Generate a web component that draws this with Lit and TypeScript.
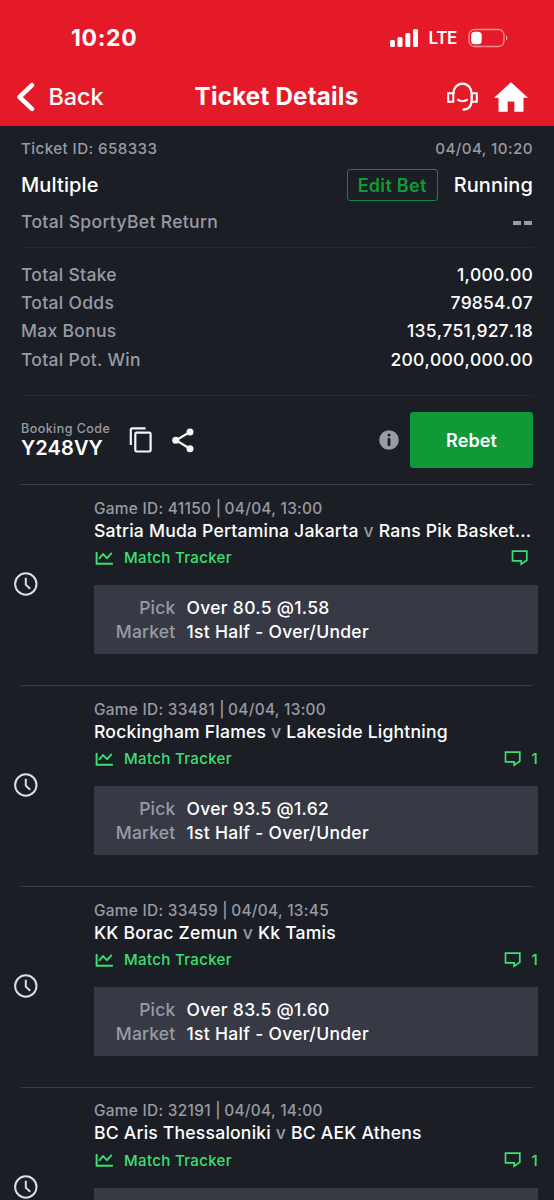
import { LitElement, html, css, nothing } from "lit";
import { customElement, property } from "lit/decorators.js";

interface Game {
  id: string;
  time: string;
  home: string;
  away: string;
  pick?: string;
  comments?: number;
}

const GAMES: Game[] = [
  { id: "41150", time: "04/04, 13:00", home: "Satria Muda Pertamina Jakarta", away: "Rans Pik Basket...", pick: "Over 80.5 @1.58" },
  { id: "33481", time: "04/04, 13:00", home: "Rockingham Flames", away: "Lakeside Lightning", pick: "Over 93.5 @1.62", comments: 1 },
  { id: "33459", time: "04/04, 13:45", home: "KK Borac Zemun", away: "Kk Tamis", pick: "Over 83.5 @1.60", comments: 1 },
  { id: "32191", time: "04/04, 14:00", home: "BC Aris Thessaloniki", away: "BC AEK Athens", comments: 1 },
];

const TOTALS: [string, string][] = [
  ["Total Stake", "1,000.00"],
  ["Total Odds", "79854.07"],
  ["Max Bonus", "135,751,927.18"],
  ["Total Pot. Win", "200,000,000.00"],
];

@customElement("game-row")
export class GameRow extends LitElement {
  @property({ attribute: false }) game!: Game;

  static styles = css`
    :host { display: block; height: 200.85px; box-sizing: border-box; }
    .row { display: flex; }
    .rule { height: 1px; background: #383b45; margin: 0 21px; }
    .status { width: 94px; flex: none; box-sizing: border-box; padding: 86px 0 0 13px; }
    .status svg { display: block; }
    .info { flex: 1; min-width: 0; padding-top: 13.5px; }
    .meta { font-size: 15.4px; line-height: 20px; letter-spacing: 0.3px; color: #989aa4; white-space: nowrap; }
    .sep { letter-spacing: -0.3px; }
    .teams { margin: 1px 15px 0 0; font-size: 17.6px; line-height: 22px; letter-spacing: 0.2px; color: #fff; white-space: nowrap; }
    .v { color: #989aa4; }
    .links { display: flex; align-items: center; height: 20px; margin: 6px 16px 0 0; color: #3ae071; font-size: 15px; letter-spacing: 0.35px; }
    .tracker { margin-left: 10px; flex: 1; }
    .comment { display: block; margin-right: 10px; }
    .bet { display: grid; grid-template-columns: 81.5px 1fr; column-gap: 11px; align-content: center; box-sizing: border-box; height: 68.5px; padding-top: 1.5px; margin: 17.5px 16px 0 0; background: #373a45; font-size: 17.5px; line-height: 24px; letter-spacing: 0.3px; color: #fff; }
    .label { text-align: right; color: #989aa4; letter-spacing: 0.2px; }
  `;

  render() {
    const g = this.game;
    return html`
      <div class="rule"></div>
      <div class="row">
        <div class="status">
          <svg width="25" height="26" viewBox="0 0 25 26" fill="none" stroke="#dcdee4" stroke-width="2">
            <circle cx="12.8" cy="13" r="10.7" />
            <path d="M12.8 6.8v6.8l4.4 4.2" />
          </svg>
        </div>
        <div class="info">
          <div class="meta">Game ID: ${g.id} <span class="sep">| </span>${g.time}</div>
          <div class="teams">${g.home} <span class="v">v</span> ${g.away}</div>
          <div class="links">
            <svg width="20" height="16" viewBox="0 0 20 16" fill="none" stroke="currentColor" stroke-width="1.9">
              <path d="M2.6 2v11.8h16.3" />
              <path d="M5 8.8l4-4.6 4 4 4.8-5.4" />
            </svg>
            <span class="tracker">Match Tracker</span>
            <svg class="comment" width="17" height="16" viewBox="0 0 17 16" fill="none" stroke="currentColor" stroke-width="1.7">
              <path d="M1.5 1.2h14.3v9l-5.6 4v-3.4H1.5z" />
            </svg>
            ${g.comments ? html`<span>${g.comments}</span>` : nothing}
          </div>
          <div class="bet">
            ${g.pick
              ? html`<span class="label">Pick</span><span>${g.pick}</span>
                  <span class="label">Market</span><span>1st Half - Over/Under</span>`
              : nothing}
          </div>
        </div>
      </div>
    `;
  }
}

@customElement("app-root")
export class AppRoot extends LitElement {
  static styles = css`
    :host { display: block; height: 1200px; overflow: hidden; background: #1b1e25; color: #fff; font-family: Inter, "Liberation Sans", sans-serif; font-weight: 500; }
    svg { display: block; flex: none; }
    header { height: 126px; background: #e51a28; overflow: hidden; }
    .statusbar { display: flex; align-items: center; height: 26px; padding: 24.5px 45px 0 71px; }
    .clock { flex: 1; font-size: 22.9px; font-weight: 700; letter-spacing: 0.7px; }
    .lte { margin: 0 11px 0 9px; font-size: 17px; font-weight: 600; letter-spacing: -0.35px; }
    .nav { display: grid; grid-template-columns: 1fr auto 1fr; align-items: center; height: 40px; margin-top: 26px; padding: 0 26px 0 16px; }
    .back { display: flex; align-items: center; gap: 13.5px; font-size: 23.5px; letter-spacing: -0.1px; }
    .title { font-size: 24.2px; font-weight: 700; letter-spacing: 0.2px; margin-left: 9px; }
    .actions { display: flex; align-items: center; justify-content: flex-end; gap: 16px; }
    .grey { color: #989aa4; }
    .line { display: flex; justify-content: space-between; align-items: center; padding: 0 21px; }
    .ids { height: 20px; padding-top: 12px; font-size: 15.2px; letter-spacing: 0.4px; }
    .kind { height: 34px; padding-top: 10px; font-size: 20px; letter-spacing: 0.12px; }
    .state { display: flex; align-items: center; gap: 16px; }
    .edit { box-sizing: border-box; width: 91px; height: 32px; border: 1.5px solid #168539; border-radius: 3px; display: flex; align-items: center; justify-content: center; color: #119b37; font-size: 18px; font-weight: 600; letter-spacing: 0.3px; }
    .return { height: 28px; padding-top: 5px; font-size: 17.5px; letter-spacing: 0.34px; }
    .dashes { display: flex; gap: 3px; padding: 3px 1px 0 0; }
    .dash { width: 8px; height: 4px; background: #989aa4; }
    .faint { height: 1px; margin: 12px 21px 0; background: #262930; }
    .totals { padding: 12px 0 10px; }
    .total { height: 28.35px; font-size: 17.5px; letter-spacing: 0.3px; }
    .amount { letter-spacing: 0.2px; font-kerning: none; }
    .booking { display: flex; align-items: center; height: 56px; padding: 16px 21px; }
    .code { width: 108px; }
    .small { font-size: 12.5px; line-height: 16px; letter-spacing: 0.45px; white-space: nowrap; }
    .value { font-size: 20px; line-height: 22px; font-weight: 600; letter-spacing: 0.1px; }
    .share { margin-left: 18.5px; flex: 1; }
    .rebet { width: 123px; height: 56px; margin-left: 11px; border-radius: 3px; background: #109a37; display: flex; align-items: center; justify-content: center; font-size: 18px; font-weight: 600; letter-spacing: 0.1px; }
  `;

  render() {
    return html`
      <header>
        <div class="statusbar">
          <span class="clock">10:20</span>
          <svg width="30" height="18" viewBox="0 0 30 18" fill="#fff">
            <rect x="1" y="11" width="5" height="7" rx="1.5" /><rect x="8.5" y="8" width="5" height="10" rx="1.5" />
            <rect x="16.3" y="4" width="5" height="14" rx="1.5" /><rect x="24" y="0" width="5" height="18" rx="1.5" />
          </svg>
          <span class="lte">LTE</span>
          <svg width="41" height="20" viewBox="0 0 41 20">
            <rect x="1" y="1.5" width="35" height="17" rx="5.5" fill="none" stroke="#fff" stroke-opacity=".5" stroke-width="1.3" />
            <rect x="3.2" y="3.7" width="10.5" height="12.6" rx="3.6" fill="#fff" />
            <path d="M38 7.2q3 2.8 0 5.6z" fill="#fff" fill-opacity=".6" />
          </svg>
        </div>
        <div class="nav">
          <div class="back">
            <svg width="19" height="30" viewBox="0 0 19 30" fill="none" stroke="#fff" stroke-width="4.5" stroke-linecap="round" stroke-linejoin="round">
              <path d="M16 3.2L3.5 15 16 26.8" />
            </svg>
            <span>Back</span>
          </div>
          <div class="title">Ticket Details</div>
          <div class="actions">
            <svg width="31" height="30" viewBox="0 0 31 30" fill="none" stroke="#fff" stroke-width="2">
              <path d="M6.3 11.8a9.2 10.200 0 0 1 18.400 0V18.500q-.4 9-8.200 9.200" stroke-width="2.300" stroke-linecap="round" />
              <path d="M6.300 11.300H1.200v8.400h5.100zM24.700 11.300h5.100v8.400h-5.100M10.300 17.400q5.200 3.800 10.400 0" />
            </svg>
            <svg width="34" height="30" viewBox="0 0 34 30" fill="#fff">
              <path d="M17 0.300L34 15.700h-4.500V29.700h-9.200V19.500h-6.600v10.200H4.500V15.700H0z" />
            </svg>
          </div>
        </div>
      </header>
      <div class="line ids grey"><span>Ticket ID: 658333</span><span>04/04, 10:20</span></div>
      <div class="line kind">
        <span>Multiple</span>
        <div class="state"><span class="edit">Edit Bet</span><span>Running</span></div>
      </div>
      <div class="line return grey">
        <span>Total SportyBet Return</span>
        <span class="dashes"><span class="dash"></span><span class="dash"></span></span>
      </div>
      <div class="faint"></div>
      <div class="totals">
        ${TOTALS.map(([k, v]) => html`<div class="line total"><span class="grey">${k}</span><span class="amount">${v}</span></div>`)}
      </div>
      <div class="faint"></div>
      <div class="booking">
        <div class="code"><div class="small grey">Booking Code</div><div class="value">Y248VY</div></div>
        <svg width="24" height="26" viewBox="0 0 24 26" fill="none" stroke="#f3f5f9" stroke-width="2.2">
          <path d="M1.8 18V2.6q0-1.200 1.200-1.200H16.500" /><rect x="6.300" y="5.700" width="15.300" height="18.800" rx="1.300" />
        </svg>
        <div class="share">
          <svg width="22" height="25" viewBox="0 0 22 25">
            <path d="M18 4L4 12.300l14 8.500" fill="none" stroke="#f3f5f9" stroke-width="2.2" />
            <g fill="#f3f5f9"><circle cx="18" cy="4" r="3.500" /><circle cx="3.700" cy="12.300" r="3.500" /><circle cx="18" cy="20.800" r="3.500" /></g>
          </svg>
        </div>
        <svg width="20" height="20" viewBox="0 0 20 20">
          <circle cx="10" cy="10" r="9.800" fill="#989aa4" />
          <circle cx="10" cy="5" r="1.500" fill="#1b1e25" /><rect x="8.600" y="8" width="2.800" height="8" rx="1" fill="#1b1e25" />
        </svg>
        <div class="rebet">Rebet</div>
      </div>
      ${GAMES.map((g) => html`<game-row .game=${g}></game-row>`)}
    `;
  }
}
